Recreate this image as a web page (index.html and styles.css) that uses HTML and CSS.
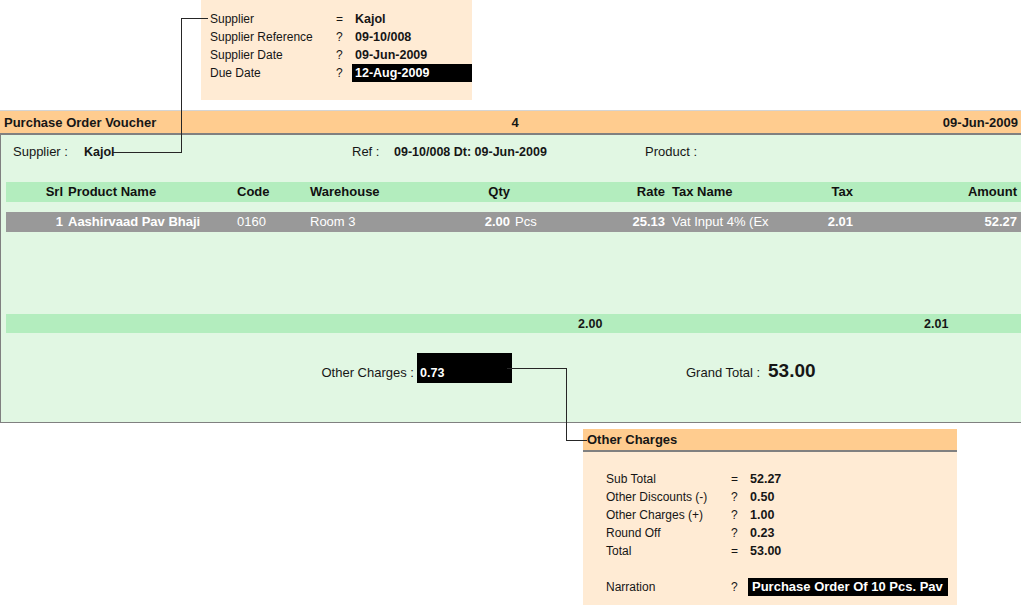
FILE: index.html
```html
<!DOCTYPE html>
<html>
<head>
<meta charset="utf-8">
<link rel="stylesheet" href="styles.css">
</head>
<body>
<div class="page">
  <div class="popup top-popup">
    <div class="kv">
      <span class="k">Supplier</span><span class="op">=</span><span class="v">Kajol</span>
      <span class="k">Supplier Reference</span><span class="op">?</span><span class="v">09-10/008</span>
      <span class="k">Supplier Date</span><span class="op">?</span><span class="v">09-Jun-2009</span>
      <span class="k">Due Date</span><span class="op">?</span><span class="v hl">12-Aug-2009</span>
    </div>
  </div>

  <div class="voucher">
    <div class="vhead">
      <span class="title">Purchase Order Voucher</span>
      <span class="num">4</span>
      <span class="date">09-Jun-2009</span>
    </div>
    <div class="vbody">
      <div class="info">
        <span class="lbl">Supplier :</span><span class="val">Kajol</span>
        <span class="lbl">Ref :</span><span class="val">09-10/008 Dt: 09-Jun-2009</span>
        <span class="lbl">Product :</span>
      </div>

      <div class="trow thead">
        <span class="c-srl">Srl</span>
        <span class="c-name">Product Name</span>
        <span class="c-code">Code</span>
        <span class="c-wh">Warehouse</span>
        <span class="c-qty">Qty</span>
        <span class="c-unit"></span>
        <span class="c-rate">Rate</span>
        <span class="c-tname">Tax Name</span>
        <span class="c-tax">Tax</span>
        <span class="c-amt">Amount</span>
      </div>

      <div class="trow titem">
        <span class="c-srl b">1</span>
        <span class="c-name b">Aashirvaad Pav Bhaji</span>
        <span class="c-code">0160</span>
        <span class="c-wh">Room 3</span>
        <span class="c-qty b">2.00</span>
        <span class="c-unit">Pcs</span>
        <span class="c-rate b">25.13</span>
        <span class="c-tname">Vat Input 4% (Ex</span>
        <span class="c-tax b">2.01</span>
        <span class="c-amt b">52.27</span>
      </div>

      <div class="totals">
        <span class="t-qty">2.00</span>
        <span class="t-tax">2.01</span>
      </div>

      <div class="charges">
        <span class="ch-label">Other Charges :</span>
        <span class="ch-box">0.73</span>
        <span class="gt-label">Grand Total :</span>
        <span class="gt-val">53.00</span>
      </div>
    </div>
  </div>

  <div class="popup bottom-popup">
    <div class="bp-head">Other Charges</div>
    <div class="kv bp-body">
      <span class="k">Sub Total</span><span class="op">=</span><span class="v">52.27</span>
      <span class="k">Other Discounts (-)</span><span class="op">?</span><span class="v">0.50</span>
      <span class="k">Other Charges (+)</span><span class="op">?</span><span class="v">1.00</span>
      <span class="k">Round Off</span><span class="op">?</span><span class="v">0.23</span>
      <span class="k">Total</span><span class="op">=</span><span class="v">53.00</span>
      <span class="k">&nbsp;</span><span class="op"></span><span class="v"></span>
      <span class="k">Narration</span><span class="op">?</span><span class="v narr">Purchase Order Of 10 Pcs. Pav</span>
    </div>
  </div>

  <svg class="links" width="1021" height="605" viewBox="0 0 1021 605">
    <polyline points="208,18.5 181.5,18.5 181.5,152.5 113,152.5"/>
    <polyline points="507,368.5 566.5,368.5 566.5,440.5 587,440.5"/>
  </svg>
</div>
</body>
</html>
```

FILE: styles.css
```css
html, body {
  margin: 0;
  padding: 0;
  background: #ffffff;
}

.page {
  position: relative;
  width: 1021px;
  height: 605px;
  overflow: hidden;
  font-family: "Liberation Sans", Arial, sans-serif;
  font-size: 13px;
  color: #161616;
}

/* ---------- popups ---------- */
.popup {
  background: #ffebd4;
  box-sizing: border-box;
}

.top-popup {
  margin-left: 201px;
  width: 271px;
  height: 100px;
  padding: 10px 0 0 9px;
}

.kv {
  display: grid;
  grid-template-columns: 126px 19px 1fr;
  line-height: 18px;
  font-size: 12px;
}

.kv .v {
  font-weight: bold;
  font-size: 12.5px;
}

.kv .hl {
  background: #000;
  color: #fff;
  margin-left: -3px;
  padding-left: 3px;
}

/* ---------- voucher ---------- */
.voucher {
  margin-top: 10px;
  border-top: 1px solid #d4d4d4;
}

.vhead {
  display: grid;
  grid-template-columns: 508px 14px 1fr;
  height: 22px;
  line-height: 23px;
  background: #ffcc8f;
  border-bottom: 2px solid #808080;
  font-weight: bold;
  font-size: 13px;
}

.vhead .title { padding-left: 4px; }
.vhead .num { text-align: center; }
.vhead .date { text-align: right; padding-right: 3px; }

.vbody {
  background: #e1f7e3;
  border-left: 1px solid #808080;
  border-bottom: 1px solid #808080;
  padding-bottom: 39px;
}

.info {
  display: grid;
  grid-template-columns: 71px 268px 42px 251px 1fr;
  padding-left: 12px;
  padding-top: 9px;
  line-height: 16px;
}

.info .val {
  font-weight: bold;
  font-size: 12.5px;
}

.trow {
  display: grid;
  grid-template-columns: 57px 174px 73px 140px 60px 50px 105px 154px 34px 164px;
  margin-left: 5px;
  padding-right: 4px;
  height: 20px;
  line-height: 20px;
  white-space: nowrap;
}

.thead {
  margin-top: 22px;
  background: #b3edbe;
  font-weight: bold;
  color: #111;
}

.titem {
  margin-top: 10px;
  background: #999999;
  color: #ffffff;
}

.titem .b { font-weight: bold; }

.c-srl, .c-qty, .c-rate, .c-tax, .c-amt { text-align: right; }
.c-name { padding-left: 5px; }
.c-unit { padding-left: 5px; }
.c-tname { padding-left: 7px; }

.totals {
  display: grid;
  grid-template-columns: 572px 346px 1fr;
  margin-top: 82px;
  margin-left: 5px;
  height: 19px;
  line-height: 20px;
  background: #b3edbe;
  font-weight: bold;
  font-size: 12.5px;
}

.t-qty { grid-column: 2; }
.t-tax { grid-column: 3; }

.charges {
  display: flex;
  align-items: baseline;
  margin-top: 20px;
  height: 30px;
}

.ch-label {
  width: 413px;
  text-align: right;
  line-height: 16px;
}

.ch-box {
  margin-left: 3px;
  width: 95px;
  height: 30px;
  box-sizing: border-box;
  padding: 12px 0 0 3px;
  line-height: 16px;
  background: #000;
  color: #fff;
  font-weight: bold;
  font-size: 12.5px;
}

.gt-label {
  margin-left: 174px;
  width: 82px;
  line-height: 16px;
}

.gt-val {
  font-weight: bold;
  font-size: 19px;
}

/* ---------- bottom popup ---------- */
.bottom-popup {
  margin-top: 6px;
  margin-left: 583px;
  width: 374px;
  height: 176px;
}

.bp-head {
  height: 21px;
  line-height: 22px;
  padding-left: 4px;
  background: #ffcc8f;
  border-bottom: 2px solid #808080;
  font-weight: bold;
  font-size: 13px;
}

.bp-body {
  padding: 18px 0 0 23px;
  grid-template-columns: 125px 19px 1fr;
}

.bp-body .narr {
  justify-self: start;
  width: 200px;
  box-sizing: border-box;
  margin-left: -2px;
  padding-left: 4px;
  background: #000;
  color: #fff;
  font-size: 13px;
  white-space: nowrap;
}

/* ---------- connector lines ---------- */
.links {
  position: absolute;
  left: 0;
  top: 0;
  pointer-events: none;
}

.links polyline {
  fill: none;
  stroke: #262626;
  stroke-width: 1;
  shape-rendering: crispEdges;
}
```
